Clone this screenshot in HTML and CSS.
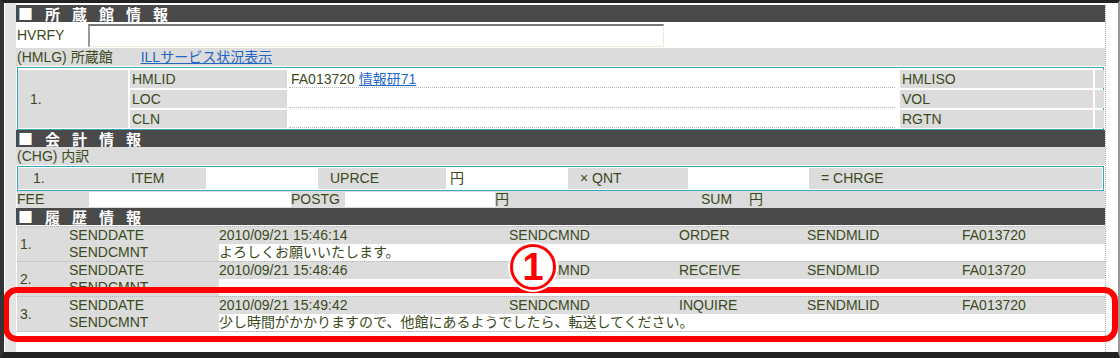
FILE: index.html
```html
<!DOCTYPE html>
<html lang="ja">
<head>
    <meta charset="UTF-8">
    <title>所蔵館情報</title>
    <link rel="stylesheet" href="styles.css">
</head>
<body>
<div class="screen">
    <div class="wrap">
        <div class="panel">
            <div class="sec-head">■所蔵館情報</div>
            <div class="hvrfy">
                <span class="hvrfy-lbl">HVRFY</span>
                <span class="field"></span>
            </div>
            <div class="sub">(HMLG) 所蔵館<a href="#" class="link ill">ILLサービス状況表示</a></div>

            <div class="box hold">
                <div class="c g no">1.</div>
                <div class="c g">HMLID</div>
                <div class="c v">FA013720 <a href="#" class="link">情報研71</a></div>
                <div class="c g">HMLISO</div>
                <div class="c g"></div>
                <div class="c g">LOC</div>
                <div class="c v"></div>
                <div class="c g">VOL</div>
                <div class="c g"></div>
                <div class="c g">CLN</div>
                <div class="c v"></div>
                <div class="c g">RGTN</div>
                <div class="c g"></div>
            </div>

            <div class="sec-head">■会計情報</div>
            <div class="sub">(CHG) 内訳</div>
            <div class="box charge">
                <div class="c g"><span class="cno">1.</span>ITEM</div>
                <div class="c w"></div>
                <div class="c g pad">UPRCE</div>
                <div class="c w">円</div>
                <div class="c g pad">× QNT</div>
                <div class="c w"></div>
                <div class="c g pad">= CHRGE</div>
            </div>
            <div class="fee">
                <div class="c g">FEE</div>
                <div class="c w"></div>
                <div class="c g">POSTG</div>
                <div class="c w"></div>
                <div class="c g">円</div>
                <div class="c g">SUM</div>
                <div class="c g">円</div>
            </div>

            <div class="sec-head">■履歴情報</div>
            <div class="hist">
                <div class="hrow">
                    <div class="hno">1.</div>
                    <div class="hl">SENDDATE</div>
                    <div>2010/09/21 15:46:14</div>
                    <div>SENDCMND</div>
                    <div>ORDER</div>
                    <div>SENDMLID</div>
                    <div>FA013720</div>
                    <div class="hl">SENDCMNT</div>
                    <div class="cmnt">よろしくお願いいたします。</div>
                </div>
                <div class="hrow">
                    <div class="hno">2.</div>
                    <div class="hl">SENDDATE</div>
                    <div>2010/09/21 15:48:46</div>
                    <div>SENDCMND</div>
                    <div>RECEIVE</div>
                    <div>SENDMLID</div>
                    <div>FA013720</div>
                    <div class="hl">SENDCMNT</div>
                    <div class="cmnt"></div>
                </div>
                <div class="hrow">
                    <div class="hno">3.</div>
                    <div class="hl">SENDDATE</div>
                    <div>2010/09/21 15:49:42</div>
                    <div>SENDCMND</div>
                    <div>INQUIRE</div>
                    <div>SENDMLID</div>
                    <div>FA013720</div>
                    <div class="hl">SENDCMNT</div>
                    <div class="cmnt">少し時間がかかりますので、他館にあるようでしたら、転送してください。</div>
                </div>
            </div>
        </div>
    </div>

    <!-- 注記 -->
    <div class="mark-box"></div>
    <div class="mark-no">1</div>
</div>
</body>
</html>
```

FILE: styles.css
```css
* { box-sizing: border-box; }
body { margin: 0; background: #fff; font-family: "Liberation Sans", "Noto Sans CJK JP", sans-serif; font-size: 14px; color: #3b4a1c; }
.screen { position: relative; width: 1120px; height: 358px; border-top: 3px solid #222; border-left: 4px solid #333; border-bottom: 6px solid #222; border-right: 2px solid #999; background: #fff; overflow: hidden; }
.wrap { margin-left: 1px; border-left: 11px solid #e4e4e4; height: 100%; padding-top: 2px; }
.panel { width: 1090px; border-right: 1px dotted #aaa; height: 100%; }

.sec-head { height: 17px; line-height: 17px; background: #4a4a4a; color: #fff; font-weight: bold; font-size: 15px; font-family: "Noto Sans CJK JP", sans-serif; letter-spacing: 12px; padding-left: 2px; }

.hvrfy { height: 26px; display: flex; align-items: center; padding-left: 1px; }
.hvrfy-lbl { width: 71px; }
.field { width: 576px; height: 23px; background: #fff; border-top: 2px solid #777; border-left: 2px solid #999; border-right: 1px dotted #e6d9a8; border-bottom: 1px dotted #e6d9a8; }

.sub { height: 18px; line-height: 18px; background: #dcdcdc; padding-left: 1px; }
.ill { margin-left: 28px; }
.link { color: #1f66c8; text-decoration: underline; }

.box { margin: 1px 1px 0 1px; border: 1px solid #3aa6c4; }
.c { line-height: 18px; height: 18px; padding-left: 2px; white-space: nowrap; }
.g { background: #dcdcdc; }
.v { background: #fff; border-bottom: 1px dotted #b5b5b5; }
.w { background: #fff; }

.hold { height: 63px; padding: 2px 1px 1px 0; display: grid; grid-template-columns: 110px 157px 609px 193px 9px; grid-template-rows: repeat(3, 18px); column-gap: 2px; row-gap: 2px; }
.hold .no { grid-row: span 3; height: auto; display: flex; align-items: center; padding-left: 12px; }
.hold .v { margin-right: 3px; }

.charge { height: 25px; padding: 1px 1px 1px 0; display: grid; grid-template-columns: 188px 108px 128px 118px 120px 117px 1fr; column-gap: 2px; }
.charge .c { height: 21px; line-height: 21px; }
.cno { display: inline-block; width: 111px; padding-left: 13px; }
.pad { padding-left: 12px; }

.fee { height: 17px; margin-left: 1px; display: grid; grid-template-columns: 72px 202px 54px 150px 206px 48px 1fr; background: #dcdcdc; }
.fee .c { height: 17px; line-height: 17px; padding-left: 0; }
.fee .w { margin: 1px 0; height: 15px; }

.hist { margin-top: 1px; margin-left: 1px; }
.hrow { display: grid; grid-template-columns: 52px 150px 290px 170px 128px 155px 1fr; grid-template-rows: 17px 17px; border-top: 1px dotted #b5b5b5; background: #dcdcdc; line-height: 17px; white-space: nowrap; }
.hrow:last-child { border-bottom: 1px dotted #b5b5b5; }
.hno { grid-row: span 2; display: flex; align-items: center; padding-left: 3px; }
.cmnt { grid-column: 3 / 8; background: #fff; }

.mark-box { position: absolute; left: -1px; top: 284px; width: 1115px; height: 55px; border: 6px solid #f00; border-radius: 14px; }
.mark-no { position: absolute; left: 506px; top: 241px; width: 46px; height: 46px; border: 3px solid #f00; border-radius: 50%; background: #fff; box-shadow: 0 0 0 2px #fff; color: #f00; font-weight: bold; font-size: 38px; line-height: 40px; text-align: center; }
```
